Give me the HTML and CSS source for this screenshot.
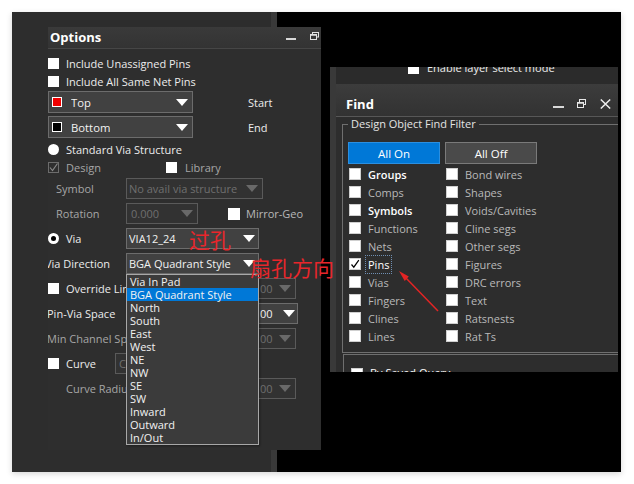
FILE: index.html
```html
<!DOCTYPE html>
<html>
<head>
<meta charset="utf-8">
<link rel="stylesheet" href="styles.css">
</head>
<body>
<div class="screen">
  <div class="desk-left"></div>
  <div class="desk-strip"></div>
  <div class="desk-black"></div>

  <div class="win options">
    <div class="titlebar">
      <span class="title">Options</span>
      <span class="tb-icons">
        <span class="ico-min opt-min"></span>
        <svg class="ico-restore opt-restore" width="9" height="8" viewBox="0 0 9 8"><rect x="2.5" y="0.5" width="6" height="4.5" fill="none" stroke="#e0e0e0"/><rect x="0.5" y="2.5" width="6" height="5" fill="#363636" stroke="#e0e0e0"/><line x1="0" y1="3" x2="7" y2="3" stroke="#e0e0e0" stroke-width="1.5"/></svg>
      </span>
    </div>
    <div class="opt-body">
      <div class="row h18"><span class="cb"></span><span class="lbl">Include Unassigned Pins</span></div>
      <div class="row h18"><span class="cb"></span><span class="lbl">Include All Same Net Pins</span></div>
      <div class="row h22 mt1">
        <div class="dd dd-layer"><span class="swatch red"></span><span class="dd-text">Top</span><span class="tri tri-l"></span></div>
        <span class="side">Start</span>
      </div>
      <div class="row h22 mt3">
        <div class="dd dd-layer"><span class="swatch black"></span><span class="dd-text">Bottom</span><span class="tri tri-l"></span></div>
        <span class="side">End</span>
      </div>
      <div class="row h18 mt2"><span class="radio"></span><span class="lbl">Standard Via Structure</span></div>
      <div class="row h18">
        <div class="pair w118"><span class="cb cb-dis"><svg width="11" height="11" viewBox="0 0 11 11"><path d="M2 5.5 L4.5 8.5 L9.5 1.5" fill="none" stroke="#8a8a8a" stroke-width="1.1"/></svg></span><span class="lbl gray">Design</span></div>
        <div class="pair"><span class="cb"></span><span class="lbl gray lib">Library</span></div>
      </div>
      <div class="row h21 mt2">
        <span class="lab w78 ind8 gray">Symbol</span>
        <div class="dd dis w137"><span class="dd-text">No avail via structure</span><span class="tri"></span></div>
      </div>
      <div class="row h21 mt4">
        <span class="lab w78 ind8 gray">Rotation</span>
        <div class="dd dis w72"><span class="dd-text rot">0.000</span><span class="tri"></span></div>
        <span class="cb mirror"></span><span class="lbl gray2">Mirror-Geo</span>
      </div>
      <div class="row h21 mt4">
        <div class="pair w78"><span class="radio on"></span><span class="lbl">Via</span></div>
        <div class="dd w133"><span class="dd-text">VIA12_24</span><span class="tri"></span></div>
      </div>
      <div class="row h21 mt4">
        <span class="lab w78 out3">Via Direction</span>
        <div class="dd w133 anchor"><span class="dd-text">BGA Quadrant Style</span><span class="tri"></span>
          <ul class="droplist">
            <li>Via In Pad</li>
            <li class="sel">BGA Quadrant Style</li>
            <li>North</li>
            <li>South</li>
            <li>East</li>
            <li>West</li>
            <li>NE</li>
            <li>NW</li>
            <li>SE</li>
            <li>SW</li>
            <li>Inward</li>
            <li>Outward</li>
            <li>In/Out</li>
          </ul>
        </div>
      </div>
      <div class="row h21 mt4">
        <div class="pair w78 clip"><span class="cb"></span><span class="lbl">Override Line Width</span></div>
        <div class="dd dis w51 hid"><span class="dd-text tail">00</span><span class="tri"></span></div>
      </div>
      <div class="row h21 mt4">
        <span class="lab w78 out1 clip">Pin-Via Space</span>
        <div class="dd w53 hid"><span class="dd-text tail">00</span><span class="tri tri-pv"></span></div>
      </div>
      <div class="row h21 mt4">
        <span class="lab w78 out1 clip gray">Min Channel Space</span>
        <div class="dd dis w51 hid"><span class="dd-text tail">00</span><span class="tri"></span></div>
      </div>
      <div class="row h21 mt4">
        <div class="pair w67"><span class="cb"></span><span class="lbl">Curve</span></div>
        <div class="dd dis w135"><span class="dd-text cu">Curve</span></div>
      </div>
      <div class="row h21 mt4">
        <span class="lab w78 ind18 clip gray">Curve Radius</span>
        <div class="dd dis w51 hid"><span class="dd-text tail">00</span><span class="tri"></span></div>
      </div>
    </div>
  </div>

  <div class="win find">
    <div class="find-strip"></div>
    <div class="find-main">
      <div class="find-top">
        <div class="find-top-row"><span class="cb"></span><span class="lbl">Enable layer select mode</span></div>
      </div>
      <div class="find-head">
        <span class="title">Find</span>
        <span class="fh-icons">
          <span class="ico-min find-min"></span>
          <svg class="ico-restore" width="9" height="9" viewBox="0 0 9 9"><rect x="2.5" y="0.5" width="6" height="5" fill="none" stroke="#e8e8e8"/><rect x="0.5" y="3.5" width="6" height="5" fill="#353535" stroke="#e8e8e8"/><line x1="0" y1="4" x2="7" y2="4" stroke="#e8e8e8" stroke-width="1.5"/></svg>
          <svg class="ico-x" width="11" height="10" viewBox="0 0 11 10"><path d="M0.8 0.5 L10.2 9.5 M10.2 0.5 L0.8 9.5" stroke="#ececec" stroke-width="1.5"/></svg>
        </span>
      </div>
      <fieldset class="filter">
        <legend>Design Object Find Filter</legend>
        <div class="btns">
          <span class="btn on">All On</span>
          <span class="btn off">All Off</span>
        </div>
        <div class="cbgrid">
          <div class="item"><span class="fcb"></span><span class="it strong">Groups</span></div>
          <div class="item"><span class="fcb"></span><span class="it">Bond wires</span></div>
          <div class="item"><span class="fcb"></span><span class="it">Comps</span></div>
          <div class="item"><span class="fcb"></span><span class="it">Shapes</span></div>
          <div class="item"><span class="fcb"></span><span class="it strong">Symbols</span></div>
          <div class="item"><span class="fcb"></span><span class="it">Voids/Cavities</span></div>
          <div class="item"><span class="fcb"></span><span class="it">Functions</span></div>
          <div class="item"><span class="fcb"></span><span class="it">Cline segs</span></div>
          <div class="item"><span class="fcb"></span><span class="it">Nets</span></div>
          <div class="item"><span class="fcb"></span><span class="it">Other segs</span></div>
          <div class="item"><span class="fcb"><svg width="12" height="12" viewBox="0 0 12 12"><path d="M2.5 6.5 L4.8 9.2 L9.8 2.2" fill="none" stroke="#000" stroke-width="1.2"/></svg></span><span class="it white focus">Pins</span></div>
          <div class="item"><span class="fcb"></span><span class="it">Figures</span></div>
          <div class="item"><span class="fcb"></span><span class="it">Vias</span></div>
          <div class="item"><span class="fcb"></span><span class="it">DRC errors</span></div>
          <div class="item"><span class="fcb"></span><span class="it">Fingers</span></div>
          <div class="item"><span class="fcb"></span><span class="it">Text</span></div>
          <div class="item"><span class="fcb"></span><span class="it">Clines</span></div>
          <div class="item"><span class="fcb"></span><span class="it">Ratsnests</span></div>
          <div class="item"><span class="fcb"></span><span class="it">Lines</span></div>
          <div class="item"><span class="fcb"></span><span class="it">Rat Ts</span></div>
        </div>
      </fieldset>
      <div class="saved">
        <div class="saved-row"><span class="fcb"></span><span class="it white">By Saved Query</span></div>
      </div>
    </div>
  </div>

  <span class="note note1">过孔</span>
  <span class="note note2">扇孔方向</span>
  <svg class="arrow" width="52" height="52" viewBox="0 0 52 52">
    <path d="M13 13 L46 47" stroke="#e32424" stroke-width="1.5" fill="none"/>
    <polygon points="7,7 16.8,12.6 12.7,16.9" fill="#e32424"/>
  </svg>
</div>
</body>
</html>
```

FILE: styles.css
```css
* { box-sizing: border-box; }
html, body { margin: 0; background: #fff; }
body {
  font-family: "Open Sans", "Noto Sans", sans-serif;
  font-size: 11px;
  color: #ececec;
}

.screen {
  position: relative;
  margin: 12px;
  width: 609px;
  height: 460px;
  display: flex;
  overflow: hidden;
  box-shadow: 0 2px 6px rgba(0, 0, 0, 0.16);
}
.desk-left { width: 259px; background: #2d2d2d; }
.desk-strip { width: 6px; background: #393939; }
.desk-black { flex: 1; background: #000; }

.win { position: absolute; overflow: hidden; }

/* ---------- Options ---------- */
.options {
  left: 36px;
  top: 15px;
  width: 273px;
  height: 423px;
  background: #2e2e2e;
}
.titlebar {
  height: 22px;
  display: flex;
  align-items: center;
  padding-left: 2px;
  background: linear-gradient(#3a3a3a, #333);
  border-bottom: 1px solid #464646;
}
.title { font-weight: 700; font-size: 13px; color: #fff; line-height: 16px; }
.options .title { margin-top: -2px; }
.tb-icons { margin-left: auto; display: flex; align-items: center; gap: 14px; padding-right: 2px; }
.ico-min { display: block; width: 10px; height: 2px; background: #d8d8d8; }
.opt-min { margin-top: 3px; }
.ico-restore { display: block; }
.opt-restore { margin-bottom: 4px; }

.opt-body { padding-top: 5px; }
.row { display: flex; align-items: center; white-space: nowrap; }
.h18 { height: 18px; }
.h21 { height: 21px; }
.h22 { height: 22px; }
.mt1 { margin-top: 1px; }
.mt2 { margin-top: 2px; }
.mt3 { margin-top: 3px; }
.mt4 { margin-top: 4px; }

.cb {
  display: inline-block;
  flex: none;
  width: 11px;
  height: 11px;
  background: #fff;
}
.cb-dis { background: transparent; border: 1px solid #6c6c6c; position: relative; }
.cb-dis svg { position: absolute; left: -1px; top: -1px; }
.radio {
  flex: none;
  width: 11px;
  height: 11px;
  border-radius: 50%;
  background: #fff;
  display: flex;
  align-items: center;
  justify-content: center;
}
.radio.on::after {
  content: "";
  width: 5px;
  height: 5px;
  border-radius: 50%;
  background: #000;
}
.lbl { margin-left: 7px; color: #ececec; }
.lib { margin-left: 8px; }
.gray { color: #a6a6a6; }
.gray2 { color: #b8b8b8; }
.pair { display: flex; align-items: center; flex: none; overflow: hidden; }
.w118 { width: 118px; }
.w78 { width: 78px; }
.w67 { width: 67px; }
.lab { flex: none; }
.clip { overflow: hidden; }
.ind8 { padding-left: 8px; }
.ind18 { padding-left: 18px; }
.out3 { margin-left: -3px; width: 81px; }
.out1 { margin-left: -1px; width: 79px; }

.dd {
  flex: none;
  display: flex;
  align-items: center;
  height: 100%;
  padding-left: 2px;
  background: #414141;
  border: 1px solid #6c6c6c;
  color: #f2f2f2;
}
.dd.dis { background: #323232; border-color: #5a5a5a; color: #6f6f6f; }
.dd-text { white-space: nowrap; overflow: hidden; }
.w137 { width: 137px; }
.w72 { width: 72px; }
.w133 { width: 133px; }
.w51 { width: 51px; }
.w53 { width: 53px; }
.w135 { width: 135px; }
.hid { margin-left: 119px; padding-left: 14px; }
.tail { margin-left: 0; }
.cu { width: 8px; margin-left: 1px; }
.rot { padding-left: 2px; }
.tri {
  margin-left: auto;
  margin-right: 3px;
  width: 0;
  height: 0;
  border-left: 6px solid transparent;
  border-right: 6px solid transparent;
  border-top: 7px solid #fff;
}
.dis .tri { border-top-color: #696969; margin-right: 4px; }
.tri-l { margin-right: 4px; }
.tri-pv { margin-right: 2px; }
.dd-layer { width: 145px; padding-left: 3px; }
.dd-layer .dd-text { margin-left: 9px; font-size: 11.3px; }
.swatch { width: 10px; height: 10px; border: 1px solid #fff; flex: none; }
.swatch.red { background: #f00000; }
.swatch.black { background: #000; }
.side { margin-left: 55px; color: #ececec; }
.mirror { margin-left: 30px; width: 12px; height: 12px; }
.mirror + .lbl { margin-left: 6px; }

.anchor { position: relative; }
.droplist {
  position: absolute;
  left: -1px;
  top: 20px;
  width: 133px;
  margin: 0;
  padding: 0;
  list-style: none;
  background: #3b3b3b;
  border: 1px solid #a8a8a8;
  box-shadow: 1px 1px 2px rgba(0, 0, 0, 0.35);
  z-index: 2;
}
.droplist li {
  height: 13px;
  line-height: 13px;
  padding-left: 3px;
  color: #f2f2f2;
  white-space: nowrap;
}
.droplist li.sel { background: #0078d7; }

/* ---------- Find ---------- */
.find {
  left: 318px;
  top: 55px;
  width: 288px;
  height: 305px;
  display: flex;
  background: #2d2d2d;
}
.find-strip { width: 6px; flex: none; background: #393939; }
.find-main { flex: 1; overflow: hidden; display: flex; flex-direction: column; }
.find-top { height: 17px; flex: none; overflow: hidden; background: #2b2b2b; }
.find-top-row {
  margin-top: -9px;
  height: 18px;
  display: flex;
  align-items: center;
  padding-left: 72px;
}
.find-top-row .cb { margin-top: 2px; }
.find-top-row .lbl { margin-left: 8px; }
.find-head {
  height: 33px;
  flex: none;
  display: flex;
  align-items: center;
  padding: 7px 7px 0 10px;
  background: linear-gradient(#3c3c3c, #323232);
  border-bottom: 1px solid #575757;
}
.fh-icons { margin-left: auto; display: flex; align-items: center; }
.find-min { width: 11px; margin-top: 7px; }
.fh-icons .ico-restore { margin-left: 13px; }
.ico-x { display: block; margin-left: 14px; }

.filter {
  flex: none;
  width: 320px;
  margin: 0 0 0 6px;
  padding: 11px 0 6px 5px;
  border: 1px solid #6f6f6f;
  border-right: none;
  min-width: 0;
}
.filter legend {
  padding: 0 3px;
  line-height: 14px;
  color: #e4e4e4;
  font-size: 11px;
}
.btns { display: flex; gap: 5px; height: 22px; }
.btn {
  width: 92px;
  display: flex;
  align-items: center;
  justify-content: center;
  color: #fff;
  font-size: 11.5px;
}
.btn.on { background: #0078d7; border: 1px solid #2b8fe0; }
.btn.off { background: #4a4a4a; border: 1px solid #7a7a7a; }
.cbgrid {
  margin-top: 1px;
  margin-left: 1px;
  margin-bottom: 1px;
  display: grid;
  grid-template-columns: 97px 97px;
  grid-auto-rows: 18px;
}
.item { display: flex; align-items: center; white-space: nowrap; }
.fcb {
  flex: none;
  width: 12px;
  height: 12px;
  background: #fff;
  border: 1px solid #cfcfcf;
  position: relative;
}
.fcb svg { position: absolute; left: -1px; top: -1px; }
.it { margin-left: 7px; color: #b9b9b9; }
.it.strong { color: #fff; font-weight: 600; }
.it.white { color: #fff; }
.it.focus { outline: 1px dotted #6f8fb3; outline-offset: 1px; padding: 0 1px; margin-left: 6px; }

.saved {
  flex: 1;
  margin: 1px 0 0 7px;
  border-top: 1px solid #6f6f6f;
  border-left: 1px solid #6f6f6f;
  padding: 13px 0 0 7px;
}
.saved-row { display: flex; align-items: flex-start; height: 14px; }
.saved-row .it { line-height: 14px; margin-top: -2px; }

/* ---------- annotations ---------- */
.note {
  position: absolute;
  font-family: "Noto Sans CJK SC", sans-serif;
  font-size: 21px;
  line-height: 21px;
  color: #e8262b;
  white-space: nowrap;
  z-index: 5;
}
.note1 { left: 177px; top: 217px; }
.note2 { left: 238px; top: 245px; }
.arrow { position: absolute; left: 380px; top: 252px; z-index: 5; }
```
